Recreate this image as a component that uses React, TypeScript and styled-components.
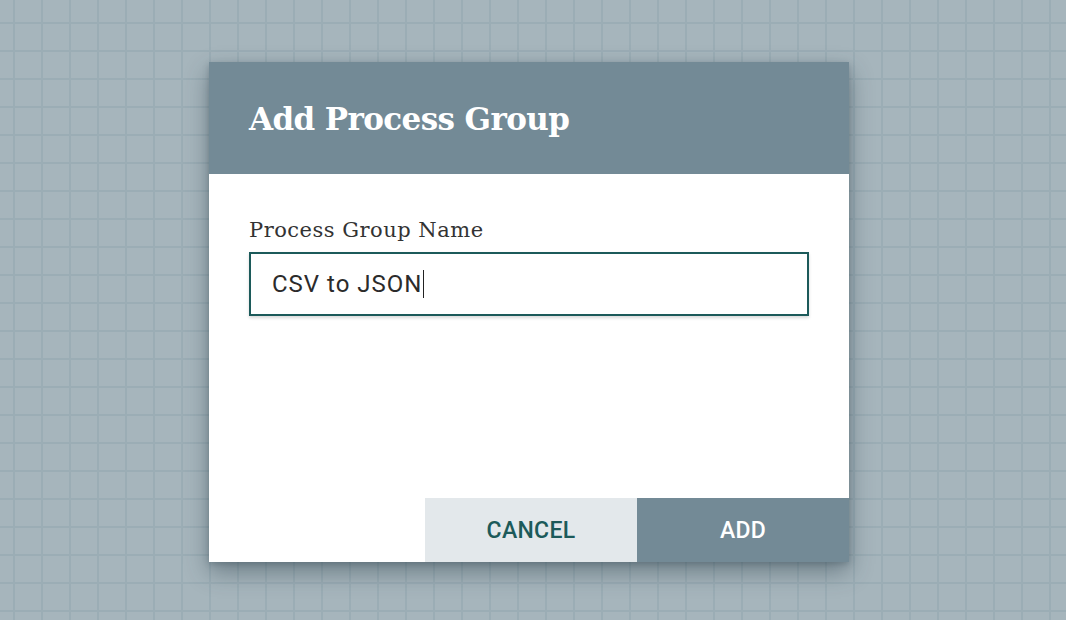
import React from "react";
import styled, { createGlobalStyle } from "styled-components";

const GlobalStyle = createGlobalStyle`
  html, body {
    margin: 0;
    padding: 0;
  }
  body {
    font-family: Roboto, "Liberation Sans", sans-serif;
  }
`;

/**
 * canvas background with the grid
 */
const Canvas = styled.div`
  width: 1066px;
  height: 620px;
  box-sizing: border-box;
  padding-top: 62px;
  display: flex;
  justify-content: center;
  align-items: flex-start;
  background-color: #a6b5bc;
  background-image:
    linear-gradient(to right, #9badb5 2px, transparent 2px),
    linear-gradient(to bottom, #9badb5 2px, transparent 2px);
  background-size: 28px 28px;
  background-position: 13px 22px;
  overflow: hidden;
`;

const Dialog = styled.div`
  width: 640px;
  height: 500px;
  margin-left: -8px;
  background: #ffffff;
  display: flex;
  flex-direction: column;
  box-shadow: 0 10px 22px rgba(40, 60, 70, 0.45), 0 2px 6px rgba(40, 60, 70, 0.25);
`;

const Header = styled.div`
  height: 112px;
  flex-shrink: 0;
  background: #738a96;
  display: flex;
  align-items: center;
  padding: 0 40px;
`;

const Title = styled.h1`
  margin: 0;
  margin-top: 2px;
  color: #ffffff;
  font-family: "DejaVu Serif", "Liberation Serif", serif;
  font-weight: bold;
  font-size: 31px;
  letter-spacing: -0.6px;
`;

const Body = styled.div`
  flex: 1;
  padding: 44px 40px 0 40px;
  display: flex;
  flex-direction: column;
`;

const Label = styled.label`
  font-family: "DejaVu Serif", "Liberation Serif", serif;
  font-size: 21px;
  letter-spacing: 0.5px;
  color: #333333;
  line-height: 24px;
  margin-bottom: 10px;
`;

const InputBox = styled.div`
  width: 560px;
  height: 64px;
  box-sizing: border-box;
  border: 2px solid #1c5a5a;
  box-shadow: 0 2px 3px rgba(0, 0, 0, 0.15);
  display: flex;
  align-items: center;
  padding-left: 21px;
  font-family: Roboto, "Liberation Sans", sans-serif;
  font-size: 24px;
  letter-spacing: 1px;
  color: #2b2b2b;
`;

const Caret = styled.span`
  display: inline-block;
  width: 1.5px;
  height: 28px;
  background: #222;
  margin-left: 0;
`;

const Footer = styled.div`
  display: flex;
  justify-content: flex-end;
  height: 64px;
`;

const Button = styled.button<{ $primary?: boolean }>`
  width: 212px;
  height: 64px;
  border: none;
  margin: 0;
  font-family: Roboto, "Liberation Sans", sans-serif;
  font-weight: 500;
  font-size: 23px;
  letter-spacing: 0.3px;
  background: ${(p) => (p.$primary ? "#738a96" : "#e3e8eb")};
  color: ${(p) => (p.$primary ? "#ffffff" : "#1c5a5a")};
  cursor: pointer;
`;

export default function App(): React.JSX.Element {
  return (
    <>
      <GlobalStyle />
      <Canvas>
        <Dialog>
          <Header>
            <Title>Add Process Group</Title>
          </Header>
          <Body>
            <Label>Process Group Name</Label>
            <InputBox>
              CSV to JSON<Caret />
            </InputBox>
          </Body>
          <Footer>
            <Button>CANCEL</Button>
            <Button $primary>ADD</Button>
          </Footer>
        </Dialog>
      </Canvas>
    </>
  );
}
